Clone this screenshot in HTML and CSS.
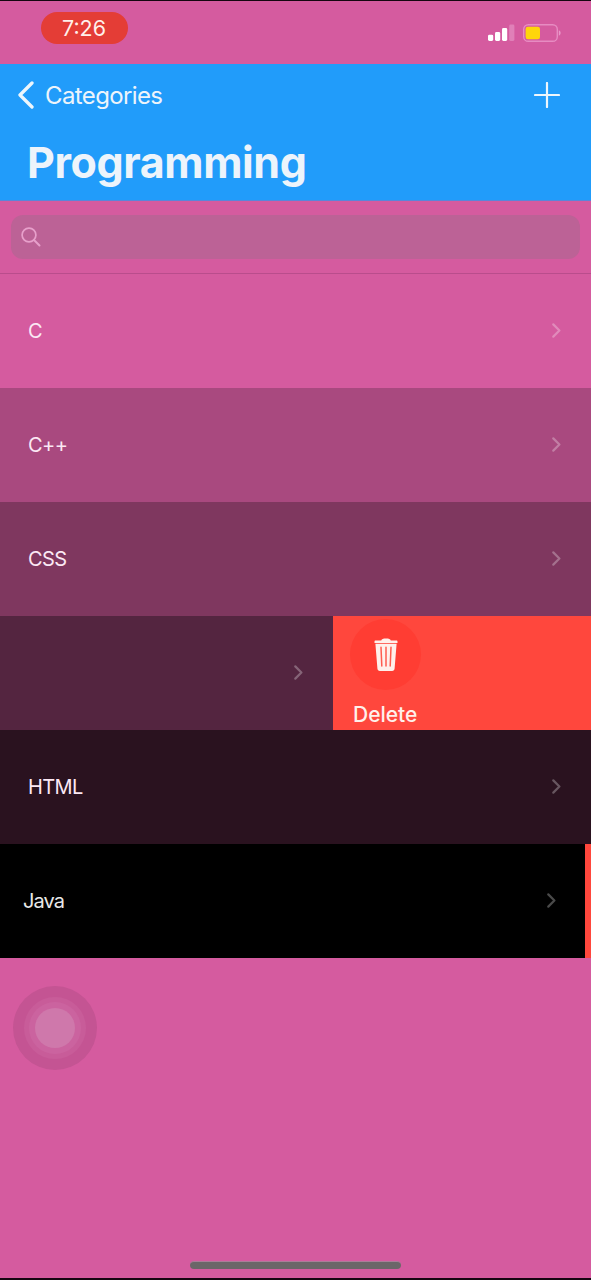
FILE: index.html
```html
<!DOCTYPE html>
<html lang="en">
<head>
<meta charset="utf-8">
<title>Programming</title>
<link rel="stylesheet" href="styles.css">
</head>
<body>
<div class="screen">
  <header class="status">
    <span class="time">7:26</span>
    <div class="indicators">
      <svg class="signal" width="27" height="18" viewBox="0 0 27 18">
        <rect x="0" y="10.7" width="5.2" height="6.3" rx="1.4" fill="#fff"/>
        <rect x="7" y="8" width="5.2" height="9" rx="1.4" fill="#fff"/>
        <rect x="14" y="4" width="5.2" height="13" rx="1.4" fill="#fff"/>
        <rect x="21.2" y="0.5" width="5.2" height="16.5" rx="1.4" fill="#e080b8"/>
      </svg>
      <svg class="battery" width="38" height="18" viewBox="0 0 38 18">
        <rect x="0.7" y="0.7" width="33.6" height="16.6" rx="4.6" fill="none" stroke="#e78cc2" stroke-width="1.4"/>
        <rect x="2.600" y="2.800" width="14.400" height="12.400" rx="2.3" fill="#ffd60a"/>
        <path d="M35.8 6.3c2.4.8 2.4 4.6 0 5.4z" fill="#e997c8"/>
      </svg>
    </div>
  </header>
  <nav class="nav">
    <div class="nav-bar">
      <a class="back">
        <svg width="18" height="28" viewBox="0 0 18 28"><path d="M15 2L3 14l12 12" fill="none" stroke="#edf6fc" stroke-width="3.3" stroke-linecap="round" stroke-linejoin="round"/></svg>
        <span class="back-label">Categories</span>
      </a>
      <svg class="add" width="26" height="26" viewBox="0 0 26 26"><path d="M13 1v24M1 13h24" stroke="#edf6fc" stroke-width="2.2" stroke-linecap="round"/></svg>
    </div>
    <h1 class="title">Programming</h1>
  </nav>
  <div class="search">
    <div class="field">
      <svg width="20" height="20" viewBox="0 0 20 20"><circle cx="8" cy="8" r="6.9" fill="none" stroke="#e7a0cb" stroke-width="1.7"/><path d="M13 13l5.5 5.5" stroke="#e7a0cb" stroke-width="2" stroke-linecap="round"/></svg>
    </div>
  </div>
  <main class="list">
    <div class="row shade-1"><span class="name">C</span><svg class="chevron" width="10" height="16" viewBox="0 0 10 16"><path d="M2.300 1.400L8.400 7.500l-6.100 6.100"/></svg></div>
    <div class="row shade-2"><span class="name">C++</span><svg class="chevron" width="10" height="16" viewBox="0 0 10 16"><path d="M2.300 1.400L8.400 7.500l-6.100 6.100"/></svg></div>
    <div class="row shade-3"><span class="name">CSS</span><svg class="chevron" width="10" height="16" viewBox="0 0 10 16"><path d="M2.300 1.400L8.400 7.500l-6.100 6.100"/></svg></div>
    <div class="swipe">
      <div class="row shade-4"><span class="name"></span><svg class="chevron" width="10" height="16" viewBox="0 0 10 16"><path d="M2.300 1.400L8.400 7.500l-6.100 6.100"/></svg></div>
      <div class="delete">
        <div class="bin">
          <svg width="24" height="34" viewBox="0 0 24 34">
            <path d="M1.6 2.6h5.6C7.8.9 9 .5 12 .5s4.200.4 4.800 2.100h5.600c.8 0 1.100.5 1.100 1.200v1.200H.5V3.800c0-.7.300-1.200 1.100-1.200z" fill="#fff0eb"/>
            <path d="M1.400 5.700h21.200l-2 24.800c-.1 1.600-1 2.400-2.500 2.400H5.900c-1.500 0-2.400-.8-2.500-2.400z" fill="#fff0eb"/>
            <path d="M7 9.200l.8 18.800M12 9.200V28M17 9.200L16.200 28" stroke="#ff5c50" stroke-width="1.500" stroke-linecap="round"/>
          </svg>
        </div>
        <span class="delete-label">Delete</span>
      </div>
    </div>
    <div class="row shade-5"><span class="name">HTML</span><svg class="chevron" width="10" height="16" viewBox="0 0 10 16"><path d="M2.300 1.400L8.400 7.500l-6.100 6.100"/></svg></div>
    <div class="swipe">
      <div class="row shade-6"><span class="name">Java</span><svg class="chevron" width="10" height="16" viewBox="0 0 10 16"><path d="M2.300 1.400L8.400 7.500l-6.100 6.100"/></svg></div>
      <div class="delete-edge"></div>
    </div>
  </main>
  <div class="touch"><div class="touch-mid"><div class="touch-inner"><div class="touch-core"></div></div></div></div>
  <div class="home"></div>
</div>
</body>
</html>
```

FILE: styles.css
```css
* { box-sizing: border-box; }
body { margin: 0; background: #d55b9f; font-family: Inter, "Liberation Sans", sans-serif; }
svg { display: block; flex: none; }
.screen {
  position: relative;
  width: 591px;
  height: 1280px;
  display: flex;
  flex-direction: column;
  overflow: hidden;
  background: #d55b9f;
  border-top: 1px solid #160610;
  border-bottom: 2px solid #160610;
}
.status { display: flex; justify-content: space-between; height: 63px; padding: 11px 30px 0 41px; }
.time {
  width: 87px;
  height: 32px;
  padding-right: 1px;
  border-radius: 16px;
  background: #e43d36;
  color: #fff0eb;
  font-size: 21.5px;
  line-height: 33px;
  text-align: center;
}
.indicators { display: flex; gap: 8px; padding-top: 12px; }
.nav { height: 137px; background: #219cfa; border-bottom: 1px solid #5a86d8; color: #edf4fb; }
.nav-bar { display: flex; align-items: center; justify-content: space-between; height: 62px; padding: 0 31px 0 17px; }
.back { display: flex; align-items: center; gap: 10px; }
.back-label { padding-top: 2px; font-size: 24px; letter-spacing: -0.62px; line-height: 30px; }
.title { margin: 8px 0 0 27px; font-size: 43px; line-height: 56px; font-weight: 700; letter-spacing: -0.4px; }
.search { height: 73px; padding: 14px 11px 0; border-bottom: 1px solid #b94d8c; }
.field { display: flex; align-items: center; height: 44px; padding-left: 10px; border-radius: 12px; background: #bc6296; }
.row { display: flex; flex: 1; align-items: center; justify-content: space-between; height: 114px; padding: 0 30px 0 28px; }
.name { color: #fbe8f4; font-size: 20px; letter-spacing: -0.6px; line-height: 26px; }
.chevron path { fill: none; stroke: #fff; stroke-opacity: 0.29; stroke-width: 2.2; stroke-linecap: round; stroke-linejoin: round; }
.shade-1 { background: #d55b9f; }
.shade-2 { background: #a9497f; }
.shade-3 { background: #7f375f; }
.shade-4 { background: #542540; }
.shade-5 { background: #2a121f; }
.shade-6 { background: #000; padding: 0 29px 0 23px; }
.shade-6 .name { color: #e8e8e8; letter-spacing: -0.9px; }
.swipe { display: flex; }
.delete { width: 258px; height: 114px; padding: 3px 0 0 17px; background: #ff473d; }
.bin { display: flex; align-items: center; justify-content: center; width: 71px; height: 71px; border-radius: 50%; background: #ff3d33; }
.delete-label { display: block; margin: 12px 0 0 3px; color: #fff0eb; font-size: 21px; font-weight: 500; line-height: 26px; }
.delete-edge { width: 6px; background: #ff473d; }
.touch, .touch-mid, .touch-inner { display: flex; align-items: center; justify-content: center; border-radius: 50%; }
.touch { width: 84px; height: 84px; margin: 28px 0 0 13px; background: #c45493; }
.touch-mid { width: 62px; height: 62px; background: #c85c99; }
.touch-inner { width: 52px; height: 52px; background: #cb639f; }
.touch-core { width: 40px; height: 40px; border-radius: 50%; background: #cf78ab; }
.home { width: 211px; height: 8px; margin: auto 0 9px 190px; border-radius: 4px; background: #6b6668; border-top: 1px solid #a87f98; }
```
